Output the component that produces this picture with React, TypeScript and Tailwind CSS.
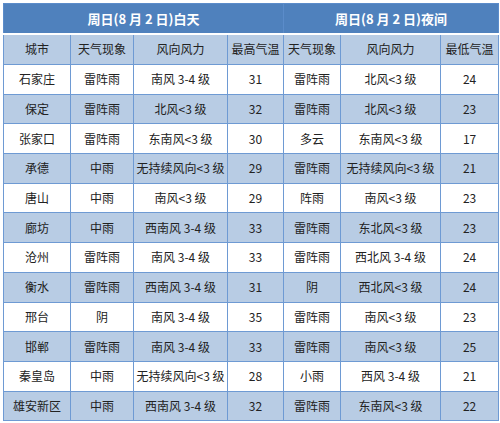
import React from "react";

const rows: string[][] = [
  ["石家庄", "雷阵雨", "南风 3-4 级", "31", "雷阵雨", "北风<3 级", "24"],
  ["保定", "雷阵雨", "北风<3 级", "32", "雷阵雨", "北风<3 级", "23"],
  ["张家口", "雷阵雨", "东南风<3 级", "30", "多云", "东南风<3 级", "17"],
  ["承德", "中雨", "无持续风向<3 级", "29", "雷阵雨", "无持续风向<3 级", "21"],
  ["唐山", "中雨", "南风<3 级", "29", "阵雨", "南风<3 级", "23"],
  ["廊坊", "中雨", "西南风 3-4 级", "33", "雷阵雨", "东北风<3 级", "23"],
  ["沧州", "雷阵雨", "南风 3-4 级", "33", "雷阵雨", "西北风 3-4 级", "24"],
  ["衡水", "雷阵雨", "西南风 3-4 级", "31", "阴", "西北风<3 级", "24"],
  ["邢台", "阴", "南风 3-4 级", "35", "雷阵雨", "南风<3 级", "23"],
  ["邯郸", "雷阵雨", "南风 3-4 级", "33", "雷阵雨", "南风<3 级", "25"],
  ["秦皇岛", "中雨", "无持续风向<3 级", "28", "小雨", "西风 3-4 级", "21"],
  ["雄安新区", "中雨", "西南风 3-4 级", "32", "雷阵雨", "东南风<3 级", "22"],
];

const heads = ["城市", "天气现象", "风向风力", "最高气温", "天气现象", "风向风力", "最低气温"];
const widths = ["67px", "63px", "94px", "56px", "57px", "100px", "58px"];

export default function App(): JSX.Element {
  return (
    <div className="w-[500px] h-[423px] bg-white pt-[3px] pl-[3px]" style={{ fontFamily: '"Noto Sans CJK SC", "Noto Sans", sans-serif' }}>
      <table className="table-fixed border-collapse w-[495px] text-[12px] text-[#222]">
        <colgroup>
          {widths.map((w, i) => (
            <col key={i} style={{ width: w }} />
          ))}
        </colgroup>
        <thead>
          <tr className="h-[30px] bg-[#4f81bd] text-white font-bold text-[13px]">
            <th colSpan={4} className="border-x-[1.5px] border-t-[1.5px] border-[#5b8cca] border-b-2 border-b-white">周日(8 月 2 日)白天</th>
            <th colSpan={3} className="border-x-[1.5px] border-t-[1.5px] border-[#5b8cca] border-b-2 border-b-white">周日(8 月 2 日)夜间</th>
          </tr>
          <tr className="h-[31px] bg-[#b8cce4]">
            {heads.map((h, i) => (
              <th key={i} className="font-normal border-[1.5px] border-[#6e9ad3]">{h}</th>
            ))}
          </tr>
        </thead>
        <tbody>
          {rows.map((r, i) => (
            <tr key={i} className={i % 2 === 0 ? "h-[29.7px] bg-white" : "h-[29.7px] bg-[#b8cce4]"}>
              {r.map((c, j) => (
                <td key={j} className="text-center border-[1.5px] border-[#6e9ad3] whitespace-nowrap p-0">{c}</td>
              ))}
            </tr>
          ))}
        </tbody>
      </table>
    </div>
  );
}
